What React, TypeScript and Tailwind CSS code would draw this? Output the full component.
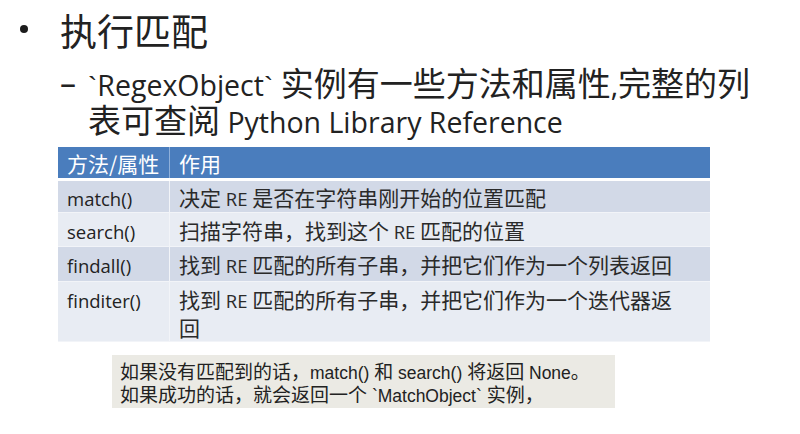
import React from "react";

const L = ({ children }: { children: React.ReactNode }) => (
  <span className="font-['Open_Sans',sans-serif] text-[28.5px] leading-[30px]">{children}</span>
);
const T = ({ children }: { children: React.ReactNode }) => (
  <span className="font-['Open_Sans',sans-serif] text-[18.5px] leading-[22px]">{children}</span>
);
const N = ({ children }: { children: React.ReactNode }) => (
  <span className="font-['Liberation_Sans',sans-serif] text-[17.5px] leading-[20px]">{children}</span>
);

const rows: { name: string; h: string; bg: string; desc: React.ReactNode; two?: boolean }[] = [
  {
    name: "match()",
    h: "h-[32px]",
    bg: "bg-[#d2d9e7]",
    desc: <>决定 <T>RE</T> 是否在字符串刚开始的位置匹配</>,
  },
  {
    name: "search()",
    h: "h-[34px]",
    bg: "bg-[#e8ecf3]",
    desc: <>扫描字符串，找到这个 <T>RE</T> 匹配的位置</>,
  },
  {
    name: "findall()",
    h: "h-[35px]",
    bg: "bg-[#d2d9e7]",
    desc: <>找到 <T>RE</T> 匹配的所有子串，并把它们作为一个列表返回</>,
  },
  {
    name: "finditer()",
    h: "h-[60px]",
    bg: "bg-[#e8ecf3]",
    two: true,
    desc: <>找到 <T>RE</T> 匹配的所有子串，并把它们作为一个迭代器返</>,
  },
];

export default function App() {
  return (
    <div className="w-[800px] h-[434px] bg-white overflow-hidden text-[#222] font-['Noto_Sans_CJK_SC',sans-serif]">
      {/* Title */}
      <div className="flex items-center pl-[20px] mt-[8px] h-[44px]">
        <div className="w-[8px] h-[8px] rounded-full bg-[#1c1c1c] -mt-[2px]" />
        <div className="ml-[32px] text-[37px] leading-[44px] h-[44px] whitespace-nowrap">执行匹配</div>
      </div>

      {/* Sub bullet */}
      <div className="flex pl-[60px] mt-[12px] text-[33px] leading-[37px]">
        <div className="w-[28px] h-[37px] font-['Open_Sans',sans-serif] text-[32px]">–</div>
        <div className="flex flex-col whitespace-nowrap">
          <div className="h-[37px]">
            <span className="font-['Liberation_Sans',sans-serif] text-[28px] leading-[30px]">`</span>
            <L>RegexObject</L>
            <span className="font-['Liberation_Sans',sans-serif] text-[28px] leading-[30px]">`</span>
            <L> </L>实例有一些方法和属性<L>,</L>完整的列
          </div>
          <div className="h-[37px]">
            表可查阅<L> Python Library Reference</L>
          </div>
        </div>
      </div>

      {/* Table */}
      <div className="ml-[58px] mt-[9px] w-[652px] text-[21px] leading-[28px]">
        <div className="flex h-[31px] items-center bg-[#4a7dbd] text-white">
          <div className="w-[112px] h-full flex items-center pl-[9px] border-r border-[#8fb0da]">
            方法/属性
          </div>
          <div className="pl-[9px]">作用</div>
        </div>
        <div className="h-[3px]" />
        {rows.map((r) => (
          <div key={r.name} className={`flex ${r.bg} ${r.h} border-b border-[#f2f4f8]`}>
            <div
              className={`w-[112px] h-full pl-[9px] border-r border-[#f2f4f8] flex ${
                r.two ? "items-start pt-[3px]" : "items-center"
              }`}
            >
              <div className="h-[28px] leading-[28px]">
                <T>{r.name}</T>
              </div>
            </div>
            <div
              className={`pl-[9px] text-[#2a2a2a] whitespace-nowrap flex flex-col ${
                r.two ? "justify-start pt-[3px]" : "justify-center"
              }`}
            >
              <div className="h-[28px]">{r.desc}</div>
              {r.two && <div className="h-[28px]">回</div>}
            </div>
          </div>
        ))}
      </div>

      {/* Note */}
      <div className="ml-[112px] mt-[13px] w-[503px] h-[53px] bg-[#ebeae4] pl-[8px] pt-[4px] text-[19px] leading-[23px] text-[#222] whitespace-nowrap">
        <div className="h-[23px]">
          如果没有匹配到的话，<N>match() </N>和<N> search() </N>将返回<N> None</N>。
        </div>
        <div className="h-[23px]">
          如果成功的话，就会返回一个<N> `MatchObject` </N>实例，
        </div>
      </div>
    </div>
  );
}
